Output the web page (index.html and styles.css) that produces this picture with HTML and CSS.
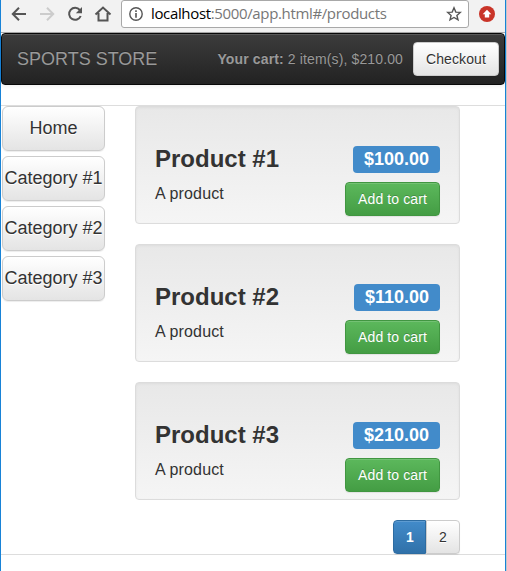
FILE: index.html
```html
<!DOCTYPE html>
<html lang="en">
<head>
<meta charset="utf-8">
<title>SportsStore</title>
<link rel="stylesheet" href="styles.css">
</head>
<body>
<div class="window">
  <header class="toolbar">
    <svg class="nav-icons" width="120" height="32" viewBox="1 0 120 32" fill="none" stroke="#555" stroke-width="2">
      <path d="M26 14H13.5M19 7.8L12.8 14L19 20.2"/>
      <path stroke="#ccc" d="M40 14H52.5M47 7.8L53.2 14L47 20.2"/>
      <path d="M79.8 10A6 6 0 1 0 80.7 16"/>
      <path fill="#555" stroke="none" d="M82 7V13.2H75.8Z"/>
      <path d="M95.5 14.5L103 7.5L110.500 14.500M98.500 13V20.500H107.500V13"/>
    </svg>
    <div class="address">
      <svg class="info" width="14" height="14" viewBox="0 0 14 14"><circle cx="7" cy="7" r="6.200" fill="none" stroke="#555" stroke-width="1.400"/><path d="M6.200 3.300h1.600v1.600H6.200zM6.200 6h1.600v4.700H6.200z" fill="#555"/></svg>
      <span class="url">localhost<span class="path">:5000/app.html#/products</span></span>
      <svg class="star" width="16" height="16" viewBox="0 0 16 16"><path d="M8 1.800L9.800 6.100L14.300 6.400L10.900 9.400L12 13.900L8 11.500L4 13.900L5.100 9.400L1.700 6.400L6.200 6.100Z" fill="none" stroke="#555" stroke-width="1.400"/></svg>
    </div>
    <svg class="extension" width="16" height="16" viewBox="0 0 16 16"><circle cx="8" cy="8" r="8" fill="#c93428"/><path d="M8 3.700L12.300 8.300H10.200V11.600H5.800V8.300H3.700Z" fill="#fff"/></svg>
  </header>

  <nav class="navbar">
    <a class="brand">SPORTS STORE</a>
    <span class="cart"><b>Your cart:</b> 2 item(s), $210.00</span>
    <a class="btn btn-default checkout">Checkout</a>
  </nav>

  <main class="panel">
    <aside class="categories">
      <a class="btn btn-default btn-lg">Home</a>
      <a class="btn btn-default btn-lg">Category #1</a>
      <a class="btn btn-default btn-lg">Category #2</a>
      <a class="btn btn-default btn-lg">Category #3</a>
    </aside>
    <section class="products">
      <article class="well">
        <div class="title"><h3>Product #1</h3><span class="label">$100.00</span></div>
        <div class="detail"><span class="lead">A product</span><a class="btn btn-success">Add to cart</a></div>
      </article>
      <article class="well">
        <div class="title"><h3>Product #2</h3><span class="label">$110.00</span></div>
        <div class="detail"><span class="lead">A product</span><a class="btn btn-success">Add to cart</a></div>
      </article>
      <article class="well">
        <div class="title"><h3>Product #3</h3><span class="label">$210.00</span></div>
        <div class="detail"><span class="lead">A product</span><a class="btn btn-success">Add to cart</a></div>
      </article>
      <div class="pager"><a class="btn btn-primary">1</a><a class="btn btn-default">2</a></div>
    </section>
  </main>
</div>
</body>
</html>
```
FILE: styles.css
```css
* { box-sizing: border-box; }
body {
  margin: 0;
  background: #c3c7ca;
  color: #333;
  font: 14px/20px "Liberation Sans", Arial, sans-serif;
  overflow: hidden;
}
.window {
  width: 506px;
  height: 571px;
  background: #fff;
  border: solid #1883d7;
  border-width: 0 1px;
}
.toolbar {
  display: flex;
  height: 33px;
  background: #f2f2f2;
  border-bottom: 1px solid #a9a9a9;
}
.nav-icons { flex: none; }
.address {
  display: flex;
  align-items: center;
  width: 348px;
  height: 28px;
  padding: 0 6px 0 7px;
  background: #fff;
  border: 1px solid #a8a8a8;
  border-radius: 3px;
}
.info { margin-right: 8px; }
.url {
  height: 26px;
  color: #000;
  font: 15px/24px "Open Sans", "Noto Sans", sans-serif;
  letter-spacing: -0.35px;
  white-space: nowrap;
}
.path { color: #777; }
.star { margin-left: auto; }
.extension { margin: 6px 0 0 10px; }
.navbar {
  display: flex;
  align-items: center;
  height: 52px;
  padding: 0 5px 0 15px;
  background: linear-gradient(#3c3c3c, #222);
  border: 1px solid #080808;
  border-radius: 4px;
  box-shadow: inset 0 1px 0 rgba(255, 255, 255, .15), 0 1px 5px rgba(0, 0, 0, .08);
  color: #999;
  text-shadow: 0 -1px 0 rgba(0, 0, 0, .25);
}
.brand { font-size: 18px; }
.cart {
  margin: 0 10px 0 auto;
  letter-spacing: .13px;
}
.btn {
  display: block;
  height: 34px;
  padding: 6px 12px;
  border: 1px solid #ccc;
  border-radius: 4px;
  text-align: center;
  white-space: nowrap;
  box-shadow: inset 0 1px 0 rgba(255, 255, 255, .15), 0 1px 1px rgba(0, 0, 0, .075);
}
.btn-default {
  color: #333;
  background: linear-gradient(#fff, #e4e4e4);
  text-shadow: 0 1px 0 #fff;
}
.checkout {
  width: 86px;
  padding: 6px 0;
  letter-spacing: .1px;
}
.btn-lg {
  height: 45px;
  padding: 9px 0;
  border-radius: 6px;
  font-size: 18px;
  line-height: 25px;
}
.btn-success {
  width: 95px;
  padding: 6px 0;
  letter-spacing: .1px;
  color: #fff;
  background: linear-gradient(#5cb85c, #449d44);
  border-color: #419641;
  text-shadow: 0 -1px 0 rgba(0, 0, 0, .2);
}
.btn-primary {
  color: #fff;
  font-weight: bold;
  background: linear-gradient(#428bca, #3071a9);
  border-color: #2d6ca2;
}
.panel {
  display: flex;
  height: 450px;
  margin-top: 20px;
  border: solid #ddd;
  border-width: 1px 0;
}
.categories {
  display: flex;
  flex-direction: column;
  gap: 5px;
  width: 103px;
  margin: 0 30px 0 1px;
}
.products {
  display: flex;
  flex-direction: column;
  gap: 20px;
  width: 325px;
}
.well {
  flex: none;
  height: 118px;
  padding: 39px 19px 0;
  border: 1px solid #dcdcdc;
  border-radius: 4px;
  background: linear-gradient(#e8e8e8, #f5f5f5);
  box-shadow: inset 0 1px 3px rgba(0, 0, 0, .05), 0 1px 0 rgba(255, 255, 255, .1);
}
.title, .detail {
  display: flex;
  justify-content: space-between;
}
.title { height: 36px; }
h3 {
  margin: 0;
  font-size: 24px;
  line-height: 26px;
}
.label {
  height: 27px;
  padding: 0 11px;
  border-radius: 4px;
  background: #428bca;
  color: #fff;
  font-weight: bold;
  font-size: 18px;
  line-height: 27px;
}
.lead {
  font-size: 16px;
  line-height: 23px;
  letter-spacing: .15px;
}
.pager {
  display: flex;
  flex: none;
  align-self: flex-end;
}
.pager .btn-primary { width: 33px; border-radius: 4px 0 0 4px; }
.pager .btn-default { width: 34px; border-radius: 0 4px 4px 0; }
```
